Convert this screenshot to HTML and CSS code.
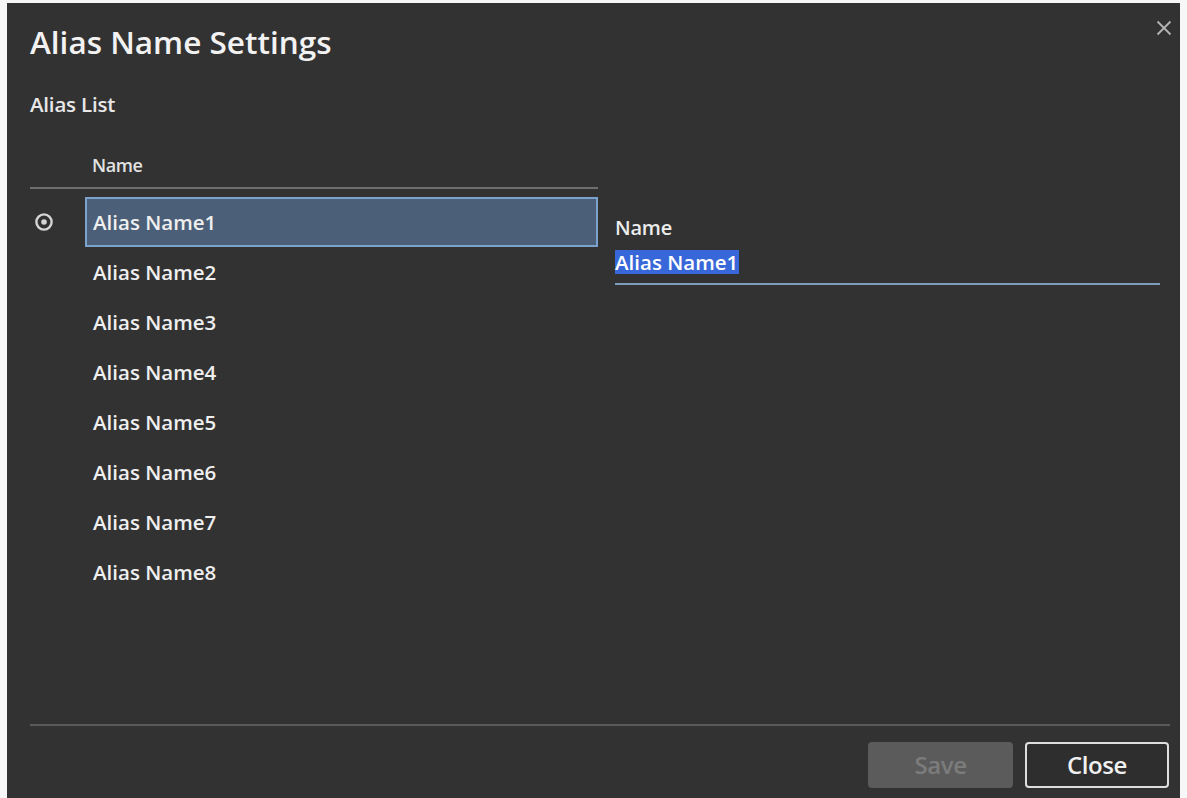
FILE: index.html
```html
<!DOCTYPE html>
<html lang="en">
<head>
<meta charset="utf-8">
<title>Alias Name Settings</title>
<link rel="stylesheet" href="styles.css">
</head>
<body>
<div class="dialog">
  <button class="close-x" aria-label="Close">
    <svg width="16" height="16" viewBox="0 0 16 16"><path d="M1.5 1.5L14.5 14.5M14.5 1.5L1.5 14.5" stroke="#b4b4b4" stroke-width="1.8" fill="none"/></svg>
  </button>
  <h1 class="title">Alias Name Settings</h1>
  <div class="section-label">Alias List</div>
  <div class="main">
    <div class="list-col">
      <div class="list-head"><span class="head-name">Name</span></div>
      <ul class="list">
        <li class="row selected">
          <span class="radio"><svg width="20" height="20" viewBox="0 0 20 20"><circle cx="10" cy="10" r="7.6" stroke="#d6d6d6" stroke-width="2.4" fill="none"/><circle cx="10" cy="10" r="2.8" fill="#d6d6d6"/></svg></span>
          <span class="cell">Alias Name1</span>
        </li>
        <li class="row"><span class="radio"></span><span class="cell">Alias Name2</span></li>
        <li class="row"><span class="radio"></span><span class="cell">Alias Name3</span></li>
        <li class="row"><span class="radio"></span><span class="cell">Alias Name4</span></li>
        <li class="row"><span class="radio"></span><span class="cell">Alias Name5</span></li>
        <li class="row"><span class="radio"></span><span class="cell">Alias Name6</span></li>
        <li class="row"><span class="radio"></span><span class="cell">Alias Name7</span></li>
        <li class="row"><span class="radio"></span><span class="cell">Alias Name8</span></li>
      </ul>
    </div>
    <div class="detail-col">
      <div class="field-label">Name</div>
      <div class="field-input"><span class="sel">Alias Name1</span></div>
    </div>
  </div>
  <div class="footer">
    <button class="btn btn-save" disabled>Save</button>
    <button class="btn btn-close">Close</button>
  </div>
</div>
</body>
</html>
```
FILE: styles.css
```css
* { box-sizing: border-box; }
html, body { margin: 0; padding: 0; background: #f7f7f7; }
body {
  font-family: "Open Sans", "Noto Sans", "Liberation Sans", sans-serif;
  color: #ededed;
}
.dialog {
  position: relative;
  margin: 3px 7px 0 7px;
  height: 795px;
  background: #323232;
  display: flex;
  flex-direction: column;
  padding: 19px 0 0 23px;
}
.close-x {
  position: absolute;
  top: 13px;
  right: 4px;
  width: 24px;
  height: 24px;
  padding: 4px;
  border: 0;
  background: transparent;
  line-height: 0;
}
.title {
  margin: 0;
  font-size: 31.5px;
  line-height: 40px;
  font-weight: 600;
  color: #f2f2f2;
}
.section-label {
  margin-top: 30px;
  font-size: 20.5px;
  line-height: 24px;
  font-weight: 600;
  color: #e8e8e8;
  letter-spacing: -0.2px;
}
.main {
  flex: 1;
  display: flex;
  margin-top: 38px;
  padding-right: 20px;
}
.list-col { width: 568px; flex: none; }
.list-head {
  height: 35px;
  border-bottom: 2px solid #6e6e6e;
  padding-left: 62px;
}
.head-name {
  font-size: 18px;
  line-height: 22px;
  font-weight: 600;
  color: #e2e2e2;
  letter-spacing: -0.4px;
}
.list {
  list-style: none;
  margin: 8px 0 0 0;
  padding: 0;
}
.row {
  display: flex;
  align-items: center;
  height: 50px;
}
.radio {
  width: 55px;
  flex: none;
  display: flex;
  align-items: center;
  padding-left: 4px;
}
.cell {
  flex: 1;
  height: 50px;
  display: flex;
  align-items: center;
  padding-left: 7px;
  font-size: 20.5px;
  font-weight: 600;
  letter-spacing: 0;
  color: #efefef;
  border: 1px solid transparent;
}
.row.selected .cell {
  background: #4b5f78;
  border: 2px solid #7aa2cc;
  padding-left: 6px;
}
.detail-col {
  flex: 1;
  margin-left: 17px;
  padding-top: 62px;
}
.field-label {
  font-size: 20px;
  line-height: 24px;
  font-weight: 600;
  color: #ececec;
  letter-spacing: -0.2px;
}
.field-input {
  margin-top: 10px;
  height: 35px;
  border-bottom: 2px solid #7d9dbd;
}
.sel {
  display: inline-block;
  font-size: 20.5px;
  line-height: 24px;
  font-weight: 600;
  letter-spacing: 0;
  color: #ffffff;
  background: #3767d8;
  padding-right: 1px;
}
.footer {
  display: flex;
  justify-content: flex-end;
  gap: 12px;
  margin-right: 10px;
  border-top: 2px solid #5a5a5a;
  padding: 16px 1px 10px 0;
}
.btn {
  width: 145px;
  height: 46px;
  font-family: inherit;
  font-size: 24px;
  font-weight: 600;
  letter-spacing: -0.4px;
  border-radius: 4px;
  line-height: 1;
}
.btn-save {
  background: #5b5b5b;
  border: 2px solid #5b5b5b;
  color: #7c7c7c;
}
.btn-close {
  width: 144px;
  background: #2e2e2e;
  border: 2px solid #dedede;
  color: #f0f0f0;
}
```
